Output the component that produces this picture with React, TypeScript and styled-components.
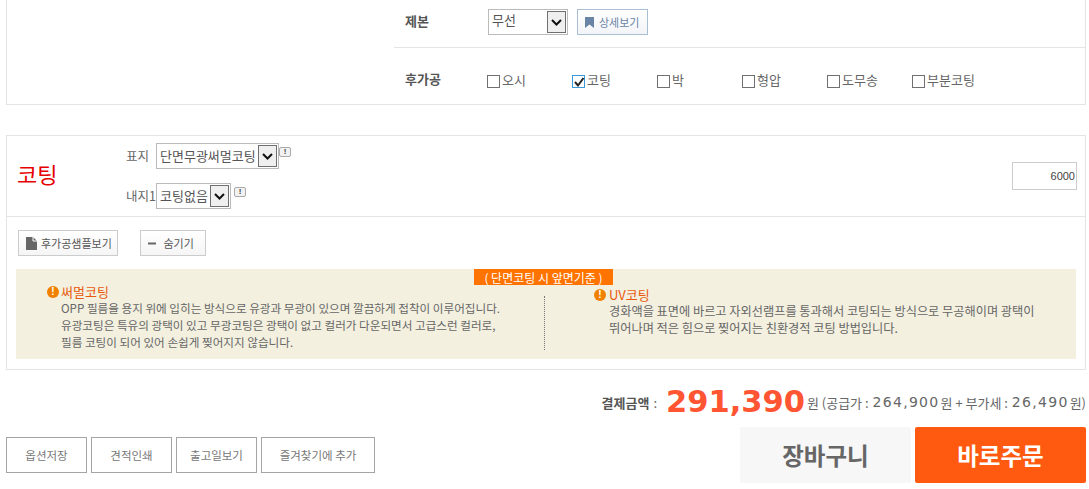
import React from 'react';
import styled, {createGlobalStyle} from 'styled-components';

const GlobalStyle = createGlobalStyle`
  html, body {
    margin: 0;
    padding: 0;
    background: #fff;
  }
  body {
    font-family: "Noto Sans CJK KR", "Liberation Sans", sans-serif;
    font-size: 12px;
    color: #666;
  }
`

const Page = styled.div`
  width: 1089px;
  height: 489px;
  padding: 0 3px 0 6px;
  box-sizing: border-box;
  overflow: hidden;
`

const TopPanel = styled.section`
  height: 105px;
  box-sizing: border-box;
  padding-left: 387px;
  border: 1px solid #e5e5e5;
  border-top: none;
`

const OptionRow = styled.div<{$height: number; $top?: number; $bottom?: number; $line?: boolean}>`
  height: ${p => p.$height}px;
  display: flex;
  align-items: center;
  box-sizing: border-box;
  padding: ${p => p.$top || 0}px 0 ${p => p.$bottom || 0}px 11px;
  border-bottom: ${p => (p.$line ? '1px solid #e5e5e5' : 'none')};
`

const OptionName = styled.div<{$width: number; $up?: number}>`
  width: ${p => p.$width}px;
  margin-bottom: ${p => p.$up || 0}px;
  font-size: 13px;
  font-weight: 700;
  color: #555;
`

const SelectBox = styled.div<{$width: number}>`
  width: ${p => p.$width}px;
  height: 26px;
  box-sizing: border-box;
  display: flex;
  align-items: center;
  justify-content: space-between;
  padding: 1px 1px 1px 3px;
  border: 1px solid #bbb;
  background: #fff;
  font-size: 13px;
  color: #555;
`

const SelectValue = styled.span<{$up?: number}>`
  margin-bottom: ${p => p.$up || 0}px;
  white-space: nowrap;
`

const SelectArrow = styled.span`
  width: 19px;
  height: 22px;
  flex: none;
  box-sizing: border-box;
  display: flex;
  align-items: center;
  justify-content: center;
  border: 1px solid #707070;
  background: #efefef;
`

const DetailButton = styled.button`
  margin-left: 9px;
  width: 71px;
  height: 26px;
  padding: 0 0 0 7px;
  display: flex;
  align-items: center;
  gap: 5px;
  border: 1px solid #a9bfd3;
  background: linear-gradient(#fff, #f2f4f8);
  font: inherit;
  font-size: 11px;
  color: #6a84a6;
`

const CheckRow = styled.div`
  display: flex;
  margin-top: 2px;
`

const CheckItem = styled.label`
  width: 85px;
  display: flex;
  align-items: center;
  gap: 2px;
  font-size: 13px;
  color: #666;
`

const CheckMark = styled.span<{$on?: boolean}>`
  width: 13px;
  height: 13px;
  margin-top: 4px;
  flex: none;
  box-sizing: border-box;
  position: relative;
  border: 1px solid ${p => (p.$on ? '#3a9ad9' : '#707070')};
  background: #fff;

  svg {
    position: absolute;
    left: 0;
    top: -1px;
  }
`

const CoatingPanel = styled.section`
  margin-top: 30px;
  height: 235px;
  box-sizing: border-box;
  border: 1px solid #e5e5e5;
`

const CoatingHead = styled.div`
  height: 81px;
  box-sizing: border-box;
  display: flex;
  align-items: center;
  padding: 0 8px 0 10px;
  border-bottom: 1px solid #e5e5e5;
`

const CoatingTitle = styled.h2`
  margin: 0 0 6px;
  width: 109px;
  font-size: 22px;
  font-weight: 400;
  color: #e60000;
`

const PaperRows = styled.div`
  flex: 1;
  display: flex;
  flex-direction: column;
  gap: 14px;
`

const PaperRow = styled.div`
  display: flex;
  align-items: flex-start;
`

const PaperName = styled.span`
  width: 30px;
  line-height: 26px;
  font-size: 12.500px;
  color: #666;
  white-space: nowrap;
`

const HelpIcon = styled.span<{$gap: number}>`
  width: 12px;
  height: 10px;
  margin: 4px 0 0 ${p => p.$gap}px;
  box-sizing: border-box;
  display: flex;
  align-items: center;
  justify-content: center;
  border: 1px solid #aaa;
  border-radius: 2px;
  background: #f1f1f1;
  font: 700 8px/1 "Liberation Sans", sans-serif;
  color: #444;
`

const QtyInput = styled.div`
  width: 65px;
  height: 28px;
  box-sizing: border-box;
  display: flex;
  align-items: center;
  justify-content: flex-end;
  padding-right: 1px;
  border: 1px solid #ccc;
  font: 11px "Liberation Sans", sans-serif;
  color: #444;
`

const ToolRow = styled.div`
  display: flex;
  gap: 22px;
  padding: 13px 0 13px 11px;
`

const ToolButton = styled.button<{$width: number}>`
  width: ${p => p.$width}px;
  height: 26px;
  padding: 0 0 0 7px;
  display: flex;
  align-items: center;
  gap: 4px;
  border: 1px solid #ccc;
  background: linear-gradient(#fff, #f5f5f5);
  font: inherit;
  font-size: 11px;
  color: #555;
`

const InfoBox = styled.div`
  position: relative;
  margin-left: 9px;
  width: 1060px;
  height: 90px;
  display: flex;
  background: #f3f0e0;
`

const InfoTag = styled.div`
  position: absolute;
  left: 458px;
  top: 0;
  width: 139px;
  height: 16px;
  display: flex;
  align-items: center;
  justify-content: center;
  background: #ff7300;
  font-size: 12px;
  color: #fff;
`

const InfoColumn = styled.div<{$width: number; $top: number; $left: number}>`
  width: ${p => p.$width}px;
  padding: ${p => p.$top}px 0 0 ${p => p.$left}px;
  box-sizing: border-box;
`

const InfoDivider = styled.div`
  width: 0;
  height: 54px;
  margin-top: 27px;
  border-left: 1px dotted #777;
`

const InfoTitle = styled.div<{$gap: number}>`
  display: flex;
  align-items: center;
  gap: ${p => p.$gap}px;
  height: 17px;
  font-size: 13px;
  color: #e8590c;
`

const InfoDot = styled.span`
  width: 12px;
  height: 12px;
  flex: none;
  display: flex;
  align-items: center;
  justify-content: center;
  border-radius: 50%;
  background: #f08000;
  font: 700 10px/1 "Liberation Sans", sans-serif;
  color: #fff;
`

const InfoText = styled.p<{$size: number; $left: number}>`
  margin: 0 0 0 ${p => p.$left}px;
  font-size: ${p => p.$size}px;
  line-height: 17px;
  color: #666;
  white-space: nowrap;
`

const TotalRow = styled.div`
  margin-top: 9px;
  height: 46px;
  display: flex;
  align-items: center;
  justify-content: flex-end;
  font-size: 13px;
  color: #666;
  white-space: nowrap;
`

const TotalName = styled.b`
  font-size: 13px;
  color: #555;
  margin-right: 4px;
`

const TotalPrice = styled.b`
  margin: 0 2px 0 9px;
  font: 700 30.500px/1 "DejaVu Sans", sans-serif;
  color: #ff5533;
`

const SubPrice = styled.span`
  margin: 0 1px;
  font: 14px/1 "DejaVu Sans", sans-serif;
  letter-spacing: 1.300px;
  color: #666;
`

const BottomRow = styled.div`
  margin-top: 2px;
  display: flex;
  align-items: center;
  justify-content: space-between;
`

const SideButtons = styled.div`
  display: flex;
  gap: 4px;
`

const SideButton = styled.button<{$width: number}>`
  width: ${p => p.$width}px;
  height: 36px;
  padding: 0;
  border: 1px solid #a5a5a5;
  background: #fff;
  font: inherit;
  font-size: 11.500px;
  color: #777;
`

const MainButtons = styled.div`
  display: flex;
  gap: 4px;
`

const MainButton = styled.button<{$primary?: boolean}>`
  width: 171px;
  height: 56px;
  padding: 0;
  border: none;
  border-radius: 2px;
  background: ${p => (p.$primary ? '#ff5a0f' : '#f7f7f7')};
  font: inherit;
  font-size: 23.500px;
  font-weight: 700;
  color: ${p => (p.$primary ? '#fff' : '#666')};
`

const Arrow = () => (
  <SelectArrow>
    <svg width="11" height="7" viewBox="0 0 11 7">
      <path d="M1 1l4.500 4.500L10 1" fill="none" stroke="#111" strokeWidth="2"/>
    </svg>
  </SelectArrow>
)

const finishes = ['오시', '코팅', '박', '형압', '도무송', '부분코팅']

const App = () => {
  return (
    <Page>
      <GlobalStyle/>
      <TopPanel>
        <OptionRow $height={48} $bottom={3} $line>
          <OptionName $width={83} $up={3}>제본</OptionName>
          <SelectBox $width={80}>
            <SelectValue $up={5}>무선</SelectValue>
            <Arrow/>
          </SelectBox>
          <DetailButton>
            <svg width="9" height="11" viewBox="0 0 9 11">
              <path d="M0 0h9v11L4.500 7.500 0 11z" fill="#6a84a6"/>
            </svg>
            상세보기
          </DetailButton>
        </OptionRow>
        <OptionRow $height={56} $top={4}>
          <OptionName $width={82}>후가공</OptionName>
          <CheckRow>
            {finishes.map(name => (
              <CheckItem key={name}>
                <CheckMark $on={name === '코팅'}>
                  {name === '코팅' && (
                    <svg width="12" height="13" viewBox="0 0 12 13">
                      <path d="M2 7l3 3.500L10.500 3" fill="none" stroke="#222" strokeWidth="2"/>
                    </svg>
                  )}
                </CheckMark>
                {name}
              </CheckItem>
            ))}
          </CheckRow>
        </OptionRow>
      </TopPanel>

      <CoatingPanel>
        <CoatingHead>
          <CoatingTitle>코팅</CoatingTitle>
          <PaperRows>
            <PaperRow>
              <PaperName>표지</PaperName>
              <SelectBox $width={123}>
                <SelectValue $up={1}>단면무광써멀코팅</SelectValue>
                <Arrow/>
              </SelectBox>
              <HelpIcon $gap={0}>!</HelpIcon>
            </PaperRow>
            <PaperRow>
              <PaperName>내지1</PaperName>
              <SelectBox $width={75}>
                <SelectValue $up={1}>코팅없음</SelectValue>
                <Arrow/>
              </SelectBox>
              <HelpIcon $gap={3}>!</HelpIcon>
            </PaperRow>
          </PaperRows>
          <QtyInput>6000</QtyInput>
        </CoatingHead>

        <ToolRow>
          <ToolButton $width={100}>
            <svg width="11" height="13" viewBox="0 0 11 13">
              <path d="M0 0h7l4 4v9H0z" fill="#666"/>
              <path d="M7 0v4h4" fill="none" stroke="#fff"/>
            </svg>
            후가공샘플보기
          </ToolButton>
          <ToolButton $width={66}>
            <svg width="9" height="13" viewBox="0 0 9 13">
              <path d="M0 5.500h8v2H0z" fill="#666"/>
            </svg>
            &nbsp;숨기기
          </ToolButton>
        </ToolRow>

        <InfoBox>
          <InfoTag>( 단면코팅 시 앞면기준 )</InfoTag>
          <InfoColumn $width={528} $top={14} $left={31}>
            <InfoTitle $gap={2}>
              <InfoDot>!</InfoDot>
              써멀코팅
            </InfoTitle>
            <InfoText $size={11.6} $left={14}>
              OPP 필름을 용지 위에 입히는 방식으로 유광과 무광이 있으며 깔끔하게 접착이 이루어집니다.<br/>
              유광코팅은 특유의 광택이 있고 무광코팅은 광택이 없고 컬러가 다운되면서 고급스런 컬러로,<br/>
              필름 코팅이 되어 있어 손쉽게 찢어지지 않습니다.
            </InfoText>
          </InfoColumn>
          <InfoDivider/>
          <InfoColumn $width={530} $top={17} $left={49}>
            <InfoTitle $gap={3}>
              <InfoDot>!</InfoDot>
              UV코팅
            </InfoTitle>
            <InfoText $size={12.2} $left={15}>
              경화액을 표면에 바르고 자외선램프를 통과해서 코팅되는 방식으로 무공해이며 광택이<br/>
              뛰어나며 적은 힘으로 찢어지는 친환경적 코팅 방법입니다.
            </InfoText>
          </InfoColumn>
        </InfoBox>
      </CoatingPanel>

      <TotalRow>
        <TotalName>결제금액</TotalName> :
        <TotalPrice>291,390</TotalPrice>
        원 (공급가 :&nbsp;<SubPrice>264,900</SubPrice>원 + 부가세 :&nbsp;<SubPrice>26,490</SubPrice>원)
      </TotalRow>

      <BottomRow>
        <SideButtons>
          <SideButton $width={81}>옵션저장</SideButton>
          <SideButton $width={81}>견적인쇄</SideButton>
          <SideButton $width={81}>출고일보기</SideButton>
          <SideButton $width={114}>즐겨찾기에 추가</SideButton>
        </SideButtons>
        <MainButtons>
          <MainButton>장바구니</MainButton>
          <MainButton $primary>바로주문</MainButton>
        </MainButtons>
      </BottomRow>
    </Page>
  );
}

export default App;
